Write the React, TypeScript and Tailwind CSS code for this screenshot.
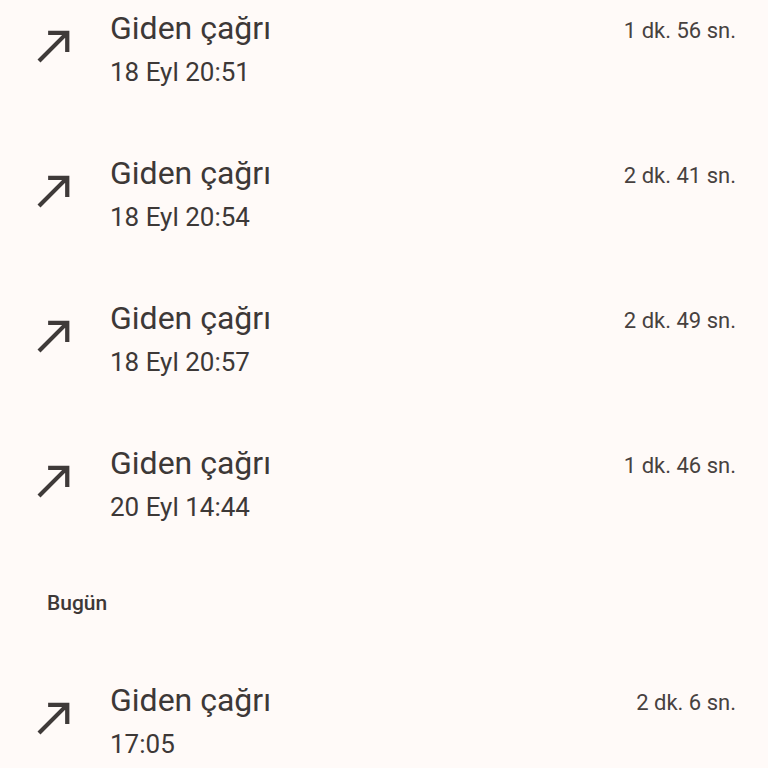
const calls = [
  { time: "18 Eyl 20:51", dur: "1 dk. 56 sn." },
  { time: "18 Eyl 20:54", dur: "2 dk. 41 sn." },
  { time: "18 Eyl 20:57", dur: "2 dk. 49 sn." },
  { time: "20 Eyl 14:44", dur: "1 dk. 46 sn." },
];

function OutgoingIcon() {
  return (
    <svg width="51" height="51" viewBox="0 0 24 24" fill="#3f3a39">
      <path d="M9 5v2h6.59L4 18.59 5.41 20 17 8.41V15h2V5z" />
    </svg>
  );
}

function CallRow({ time, dur }: { time: string; dur: string }) {
  return (
    <div className="flex h-[145px] items-start">
      <div className="w-[110px] shrink-0 pl-[29px] pt-[12px]">
        <OutgoingIcon />
      </div>
      <div className="flex flex-1 flex-col gap-[6px]">
        <span className="text-[32px] leading-[40px] text-[#3d3837]">Giden çağrı</span>
        <span className="text-[26px] leading-[36px] text-[#3d3837]">{time}</span>
      </div>
      <div className="pr-[32px] pt-[8px] text-[22px] leading-[30px] text-[#47413f]">{dur}</div>
    </div>
  );
}

export default function App() {
  return (
    <div
      className="h-[768px] w-full overflow-hidden bg-[#fffaf8] pt-[8px]"
      style={{ fontFamily: "Roboto, 'Noto Sans', sans-serif" }}
    >
      {calls.map((c) => (
        <CallRow key={c.time} time={c.time} dur={c.dur} />
      ))}
      <div className="h-[92px] pl-[47px] text-[21px] leading-[30px] font-medium text-[#3d3837]">Bugün</div>
      <CallRow time="17:05" dur="2 dk. 6 sn." />
    </div>
  );
}
